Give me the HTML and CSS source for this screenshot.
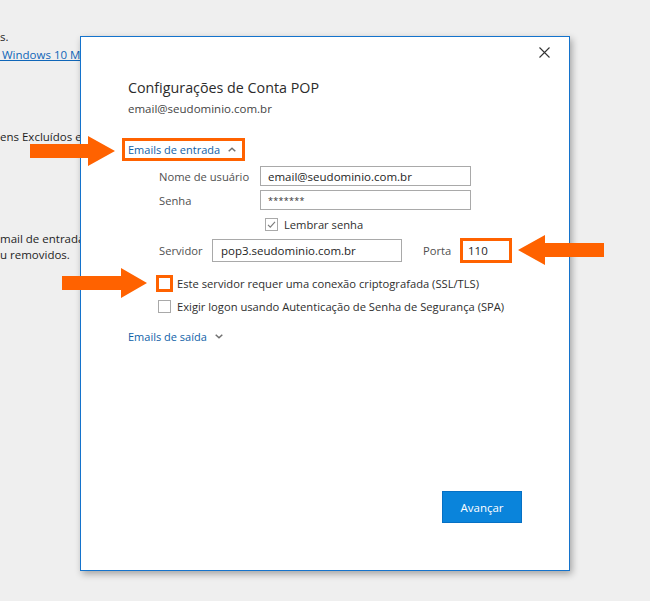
FILE: index.html
```html
<!DOCTYPE html>
<html lang="pt-BR">
<head>
<meta charset="utf-8">
<title>Configurações de Conta POP</title>
<link rel="stylesheet" href="styles.css">
</head>
<body>
<div class="page">
  <div class="bg-text">
    <p class="bg-line l1">s.</p>
    <p class="bg-line l2"><a class="bg-link">&nbsp;Windows 10 Mail</a></p>
    <p class="bg-line l3">ens Excluídos e</p>
    <p class="bg-line l4">mail de entrada</p>
    <p class="bg-line l5">u removidos.</p>
  </div>

  <div class="dialog">
    <button class="close" aria-label="Fechar">
      <svg width="11" height="11" viewBox="0 0 11 11"><path d="M0.5 0.5 L10.5 10.5 M10.5 0.5 L0.5 10.5" stroke="#333" stroke-width="1.1" fill="none"/></svg>
    </button>

    <h1 class="title">Configurações de Conta POP</h1>
    <div class="account">email@seudominio.com.br</div>

    <div class="section-head highlight">
      <span>Emails de entrada</span>
      <svg class="chev" width="8" height="5" viewBox="0 0 8 5"><path d="M0.7 4.3 L4 1.2 L7.3 4.3" stroke="#707070" stroke-width="1.5" fill="none"/></svg>
    </div>

    <div class="fields">
      <div class="row">
        <span class="lbl lbl-name">Nome de usuário</span>
        <div class="input input-long">email@seudominio.com.br</div>
      </div>
      <div class="row row-pass">
        <span class="lbl lbl-name">Senha</span>
        <div class="input input-long pass">*******</div>
      </div>
      <div class="row row-remember">
        <span class="check checked">
          <svg width="11" height="11" viewBox="0 0 11 11"><path d="M2 5.8 L4.3 8.2 L9 2.8" stroke="#7a7a7a" stroke-width="1.1" fill="none"/></svg>
        </span>
        <span class="check-text">Lembrar senha</span>
      </div>
      <div class="row row-server">
        <span class="lbl lbl-server">Servidor</span>
        <div class="input input-server">pop3.seudominio.com.br</div>
        <span class="lbl lbl-port">Porta</span>
        <div class="input input-port highlight-box">110</div>
      </div>
      <div class="row row-ssl">
        <span class="check check-hl"></span>
        <span class="check-text">Este servidor requer uma conexão criptografada (SSL/TLS)</span>
      </div>
      <div class="row row-spa">
        <span class="check"></span>
        <span class="check-text">Exigir logon usando Autenticação de Senha de Segurança (SPA)</span>
      </div>
    </div>

    <div class="section-head out">
      <span>Emails de saída</span>
      <svg class="chev" width="8" height="5" viewBox="0 0 8 5"><path d="M0.7 0.7 L4 3.8 L7.3 0.7" stroke="#707070" stroke-width="1.5" fill="none"/></svg>
    </div>

    <div class="footer">
      <button class="primary">Avançar</button>
    </div>
  </div>

  <svg class="arrow arrow-1" width="86" height="30" viewBox="0 0 86 30"><polygon points="0,8 58,8 58,0 85,15 58,30 58,22 0,22" fill="#ff6200"/></svg>
  <svg class="arrow arrow-2" width="86" height="30" viewBox="0 0 86 30"><polygon points="86,8 27,8 27,0 0,15 27,30 27,22 86,22" fill="#ff6200"/></svg>
  <svg class="arrow arrow-3" width="86" height="30" viewBox="0 0 86 30"><polygon points="0,8 59,8 59,0 85,15 59,30 59,22 0,22" fill="#ff6200"/></svg>
</div>
</body>
</html>
```

FILE: styles.css
```css
* { box-sizing: border-box; }

html, body {
  margin: 0;
  padding: 0;
}

body {
  background: #efefef;
  font-family: "Open Sans", "Noto Sans", sans-serif;
  color: #222;
}

.page {
  position: relative;
  width: 650px;
  height: 601px;
  overflow: hidden;
  background: #efefef;
}

/* background window text */
.bg-text {
  padding-top: 29px;
  font-size: 11.5px;
}
.bg-line {
  margin: 0;
  height: 16px;
  line-height: 16px;
  white-space: nowrap;
  color: #1e1e1e;
}
.l2 { margin-top: 2px; }
.l3 { margin-top: 66px; }
.l4 { margin-top: 86px; }
.l5 { margin-top: 0; }
.bg-link {
  color: #0f66b8;
  text-decoration: underline;
  margin-left: -1px;
}

/* dialog */
.dialog {
  position: absolute;
  left: 80px;
  top: 36px;
  width: 490px;
  height: 535px;
  background: #fff;
  border: 1px solid #1473cc;
  box-shadow: 2px 3px 7px rgba(0, 0, 0, 0.32);
  padding: 41px 47px 47px 47px;
  display: flex;
  flex-direction: column;
}

.close {
  position: absolute;
  top: 10px;
  right: 19px;
  width: 11px;
  height: 11px;
  padding: 0;
  border: 0;
  background: none;
  display: flex;
}

.title {
  margin: 0;
  font-size: 14.3px;
  line-height: 20px;
  font-weight: 400;
  color: #2b2b2b;
}

.account {
  margin-top: 3px;
  font-size: 11.5px;
  line-height: 16px;
  color: #444;
}

.section-head {
  display: flex;
  align-items: center;
  align-self: flex-start;
  font-size: 11px;
  line-height: 17px;
  color: #0f5fa8;
}
.section-head .chev { margin-left: 8px; }

.highlight {
  margin-top: 21px;
  margin-left: -6px;
  border: 3px solid #ff6200;
  padding: 0 6px 0 3px;
}

.out {
  margin-top: 14px;
}

.fields {
  margin-left: 31px;
  margin-top: 5px;
  display: flex;
  flex-direction: column;
}

.row {
  display: flex;
  align-items: center;
  font-size: 11.2px;
}

.lbl {
  color: #505050;
  white-space: nowrap;
  font-size: 11.2px;
}
.lbl-name { width: 101px; }
.lbl-server { width: 53px; }
.lbl-port { margin-left: 21px; width: 37px; }

.input {
  height: 20px;
  border: 1px solid #a9a9a9;
  padding: 0 7px;
  display: flex;
  align-items: center;
  color: #1e1e1e;
  white-space: nowrap;
  font-size: 11.5px;
}
.input-long { width: 211px; }
.pass {
  font-size: 9px;
  letter-spacing: 0.3px;
  color: #333;
  padding-top: 1px;
}

.row-pass { margin-top: 4px; }

.row-remember {
  margin-top: 4px;
  height: 20px;
  padding-left: 106px;
}

.check {
  width: 13px;
  height: 13px;
  border: 1px solid #a9a9a9;
  background: #fff;
  display: flex;
  align-items: center;
  justify-content: center;
  flex: none;
}
.check-text {
  margin-left: 6px;
  color: #2e2e2e;
  white-space: nowrap;
}

.row-server { margin-top: 4px; }
.input-server {
  width: 190px;
  height: 23px;
  padding-left: 8px;
}
.input-port {
  width: 52px;
  height: 25px;
  border: 3px solid #ff6200;
  padding-left: 5px;
}

.row-ssl {
  margin-top: 12px;
  margin-left: -3px;
}
.check-hl {
  width: 17px;
  height: 17px;
  border: 3px solid #ff6200;
}
.row-ssl .check-text { margin-left: 4px; }

.row-spa {
  margin-top: 7px;
  margin-left: -1px;
}
.row-spa .check-text { margin-left: 6px; }

.footer {
  margin-top: auto;
  display: flex;
  justify-content: flex-end;
}

.primary {
  width: 80px;
  height: 32px;
  background: #0a84db;
  border: 1px solid #0670c4;
  color: #fff;
  font-family: "Open Sans", "Noto Sans", sans-serif;
  font-size: 11.5px;
  padding: 0;
}

/* annotation arrows */
.arrow {
  position: absolute;
}
.arrow-1 { left: 30px; top: 136px; }
.arrow-2 { left: 518px; top: 235px; }
.arrow-3 { left: 62px; top: 268px; }
```
